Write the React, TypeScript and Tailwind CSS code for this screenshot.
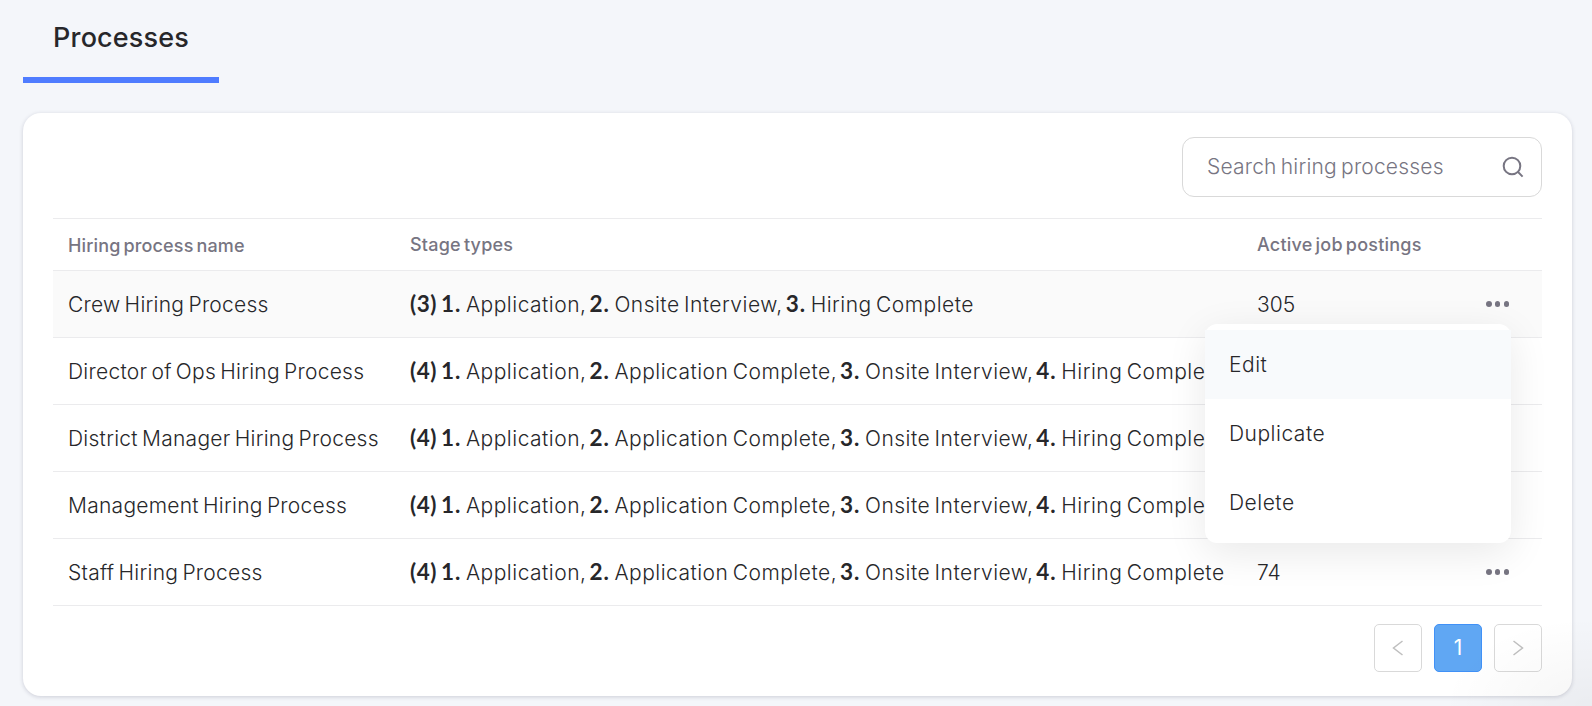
interface HiringProcess {
  name: string;
  stages: string[];
  active?: number;
}

const FULL_STAGES = ["Application", "Application Complete", "Onsite Interview", "Hiring Complete"];

const processes: HiringProcess[] = [
  { name: "Crew Hiring Process", stages: ["Application", "Onsite Interview", "Hiring Complete"], active: 305 },
  { name: "Director of Ops Hiring Process", stages: FULL_STAGES },
  { name: "District Manager Hiring Process", stages: FULL_STAGES },
  { name: "Management Hiring Process", stages: FULL_STAGES },
  { name: "Staff Hiring Process", stages: FULL_STAGES, active: 74 },
];

const COLUMNS = "grid grid-cols-[342px_847px_1fr_76px] items-center";

function Dots() {
  return (
    <button type="button" aria-label="Actions" className="flex w-[23px] justify-between">
      <span className="size-[5.5px] rounded-full bg-[#777582]" />
      <span className="size-[5.5px] rounded-full bg-[#777582]" />
      <span className="size-[5.5px] rounded-full bg-[#777582]" />
    </button>
  );
}

function StageList({ stages }: { stages: string[] }) {
  return (
    <div className="flex items-baseline whitespace-nowrap tracking-[0.48px] [word-spacing:-2px]">
      <b className="w-[31px] font-[Lato] text-[22.5px] leading-8 font-bold tracking-[0.5px]">({stages.length})</b>
      {stages.map((stage, i) => (
        <span key={stage} className="flex items-baseline">
          <b className="w-[25px] font-[Lato] text-[22.5px] leading-8 font-bold tracking-[1px]">{i + 1}.</b>
          <span className="mr-[3px]">
            {stage}
            {i < stages.length - 1 && ","}
          </span>
        </span>
      ))}
    </div>
  );
}

function ActionMenu() {
  return (
    <div className="absolute top-[53px] right-[31px] z-10 h-[219px] w-[306px] rounded-xl bg-white py-1.5 tracking-[0.5px] shadow-[0_10px_40px_rgba(0,0,0,0.09)]">
      {["Edit", "Duplicate", "Delete"].map((item) => (
        <div key={item} className="flex h-[69px] items-center px-6 first:bg-[#f8fafc]">
          {item}
        </div>
      ))}
    </div>
  );
}

function Chevron({ d }: { d: string }) {
  return (
    <svg viewBox="0 0 12 16" className="h-4 w-3" fill="none" stroke="currentColor" strokeWidth="1.5">
      <path d={d} />
    </svg>
  );
}

export default function App() {
  return (
    <main className="relative h-[706px] overflow-hidden bg-[#f4f6fa] pr-5 pl-[23px] font-[Inter,sans-serif] text-[21px] font-[350] text-[#27272a]">
      <div className="flex h-[83px] w-[196px] justify-center border-b-[6px] border-[#4f7cff] pt-[18px] text-[27px] font-medium tracking-[0.15px]">
        Processes
      </div>
      <section className="mt-[30px] h-[583px] rounded-[18px] bg-white px-[30px] pt-6 shadow-[0_1px_4px_rgba(30,30,60,0.18)]">
        <label className="ml-auto flex h-[60px] w-[360px] items-center justify-between rounded-xl border border-[#d9d9d9] pr-[17px] pl-6">
          <input
            placeholder="Search hiring processes"
            className="w-[260px] tracking-[0.2px] outline-none [word-spacing:-2px] placeholder:text-[#777582]"
          />
          <svg viewBox="0 0 22 22" className="size-[22px]" fill="none" stroke="#777582" strokeWidth="2">
            <circle cx="10" cy="10" r="8.3" />
            <path d="m15.8 15.8 4.8 4.8" />
          </svg>
        </label>
        <div className="mt-[21px] border-t border-[#ebebed]">
          <div className={`${COLUMNS} h-[52px] border-b border-[#ebebed] pl-[15px] text-lg font-medium tracking-[0.22px] text-[#777582] [word-spacing:-2px]`}>
            <span className="pt-0.5 tracking-[0.15px]">Hiring process name</span>
            <span>Stage types</span>
            <span>Active job postings</span>
          </div>
          {processes.map((process, i) => (
            <div
              key={process.name}
              className={`${COLUMNS} relative h-[67px] border-b border-[#ebebed] pl-[15px] ${i === 0 ? "bg-[#fafafa]" : ""}`}
            >
              <span className="pt-0.5 tracking-[0.26px] [word-spacing:-2px]">{process.name}</span>
              <StageList stages={process.stages} />
              <span className="pt-0.5">{process.active}</span>
              <div className="pl-5">
                <Dots />
              </div>
              {i === 0 && <ActionMenu />}
            </div>
          ))}
        </div>
        <nav className="mt-[18px] flex justify-end gap-3">
          <button type="button" aria-label="Previous" className="grid size-12 place-items-center rounded-[5px] border border-[#d9d9d9] text-[#bfbfbf]">
            <Chevron d="M10.5 1 1.5 8l9 7" />
          </button>
          <button type="button" className="grid size-12 place-items-center rounded-[5px] border border-[#4091f7] bg-[#60a7f3] font-normal text-white">
            1
          </button>
          <button type="button" aria-label="Next" className="grid size-12 place-items-center rounded-[5px] border border-[#d9d9d9] text-[#bfbfbf]">
            <Chevron d="m1.5 1 9 7-9 7" />
          </button>
        </nav>
      </section>
      <div className="pointer-events-none absolute right-0 bottom-0 h-[90px] w-[150px] bg-[radial-gradient(ellipse_at_bottom_right,rgba(0,0,0,0.04),transparent_70%)]" />
    </main>
  );
}
